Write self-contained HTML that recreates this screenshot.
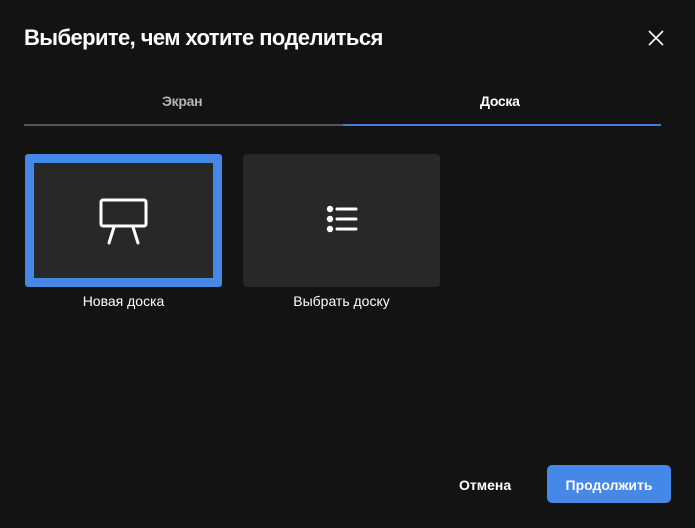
<!DOCTYPE html>
<html><head><meta charset="utf-8"><style>
html,body{margin:0;padding:0;background:#131313;width:695px;height:528px;overflow:hidden;font-family:"Liberation Sans",sans-serif;color:#fff}
.t{position:absolute;left:24px;top:25px;font-size:22px;font-weight:bold;letter-spacing:-0.6px;white-space:nowrap}
.x{position:absolute;left:648px;top:30px}
.tab{position:absolute;top:93px;font-size:14px;font-weight:bold;letter-spacing:-0.3px}
.ln{position:absolute;top:124px;height:2px}
.card{position:absolute;top:154px;width:197px;height:133px;background:#282828;border-radius:4px;box-sizing:border-box}
.lab{position:absolute;top:293px;font-size:14px;width:197px;text-align:center}
.btn{position:absolute;font-size:14px;font-weight:bold}
</style></head><body>
<div class="t">Выберите, чем хотите поделиться</div>
<svg class="x" width="16" height="16" viewBox="0 0 16 16"><path d="M1 1L15 15M15 1L1 15" stroke="#fff" stroke-width="1.6"/></svg>
<div class="tab" style="left:162px;color:#b5b5b5">Экран</div>
<div class="tab" style="left:480px">Доска</div>
<div class="ln" style="left:24px;width:319px;background:#555"></div>
<div class="ln" style="left:343px;width:318px;background:#3f7ee0"></div>
<div class="card" style="left:25px;border:9px solid #4688e8;border-radius:3px"></div>
<svg style="position:absolute;left:97px;top:197px" width="52" height="48" viewBox="0 0 52 48"><rect x="4" y="3" width="45" height="26" rx="2" fill="none" stroke="#fff" stroke-width="3"/><path d="M17 30L12 46M36 30L41 46" stroke="#fff" stroke-width="3" stroke-linecap="round"/></svg>
<div class="card" style="left:243px"></div>
<svg style="position:absolute;left:324px;top:205px" width="36" height="32" viewBox="0 0 36 32"><circle cx="6" cy="4" r="3.2" fill="#fff"/><circle cx="6" cy="14" r="3.2" fill="#fff"/><circle cx="6" cy="24" r="3.2" fill="#fff"/><path d="M13 4H32M13 14H32M13 24H32" stroke="#fff" stroke-width="3" stroke-linecap="round"/></svg>
<div class="lab" style="left:25px">Новая доска</div>
<div class="lab" style="left:243px">Выбрать доску</div>
<div class="btn" style="left:459px;top:477px">Отмена</div>
<div style="position:absolute;left:547px;top:465px;width:124px;height:38px;background:#4688e8;border-radius:5px"></div>
<div class="btn" style="left:547px;top:477px;width:124px;text-align:center">Продолжить</div>
</body></html>
